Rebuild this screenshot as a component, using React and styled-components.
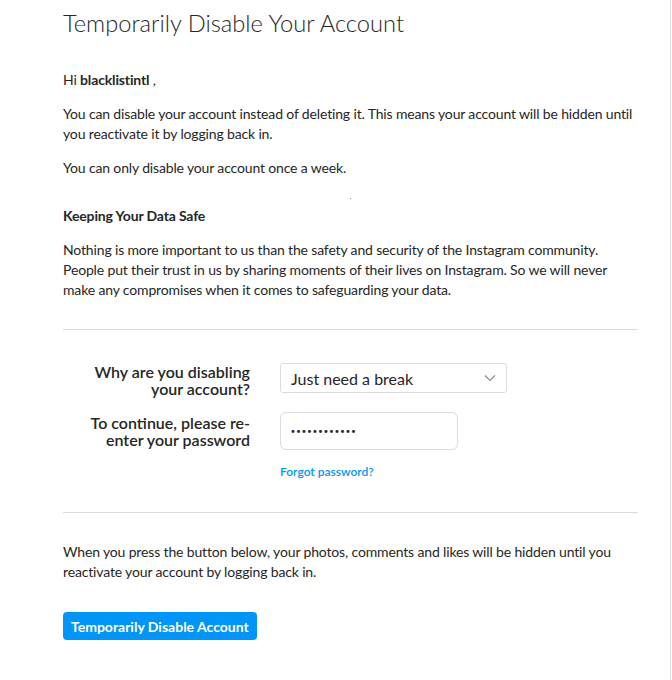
import React from "react";
import styled, { createGlobalStyle } from "styled-components";

const Global = createGlobalStyle`
  html, body { margin: 0; padding: 0; background: #fff; }
  body { font-family: Lato, "Liberation Sans", sans-serif; color: #262626; }
`;

const Page = styled.main`
  box-sizing: border-box;
  width: 671px;
  min-height: 680px;
  border-right: 1px solid #dbdbdb;
  padding: 9px 32px 0 63px;
`;

const Title = styled.h1`
  margin: 0;
  font-size: 23.7px;
  line-height: 28px;
  font-weight: 300;
  color: #262626;
`;

const Text = styled.p`
  margin: ${(p) => p.$top || 14}px 0 0;
  font-size: 14px;
  line-height: 20px;
  letter-spacing: -0.15px;
  color: #262626;
`;

const Heading = styled.h2`
  margin: 0;
  font-size: 14px;
  line-height: 20px;
  font-weight: 700;
  letter-spacing: -0.15px;
`;

const Dot = styled.div`
  height: 28px;
  display: flex;
  align-items: flex-end;
  justify-content: center;
  padding-bottom: 7px;
  box-sizing: border-box;
  &::after {
    content: "";
    width: 1px;
    height: 1px;
    margin-left: -1px;
    background: #8e8e8e;
  }
`;

const Divider = styled.hr`
  margin: ${(p) => p.$top}px 0 0;
  border: 0;
  border-top: 1px solid #dbdbdb;
  height: 0;
`;

const Form = styled.div`
  display: grid;
  grid-template-columns: 187px 1fr;
  column-gap: 30px;
  row-gap: 15px;
  margin-top: 33px;
  align-items: center;
`;

const Label = styled.label`
  justify-self: end;
  width: 170px;
  text-align: right;
  font-size: 16px;
  line-height: 17px;
  font-weight: 600;
  color: #262626;
`;

const SelectBox = styled.div`
  align-self: start;
  box-sizing: border-box;
  width: 227px;
  height: 30px;
  border: 1px solid #dbdbdb;
  border-radius: 3px;
  display: flex;
  align-items: center;
  justify-content: space-between;
  padding: 0 10px 0 10px;
  font-size: 16px;
  color: #262626;
`;

const PasswordBox = styled.div`
  box-sizing: border-box;
  width: 178px;
  height: 38px;
  border: 1px solid #dbdbdb;
  border-radius: 6px;
  display: flex;
  align-items: center;
  padding-left: 9px;
  font-size: 10px;
  letter-spacing: -0.4px;
  color: #262626;
  font-family: "DejaVu Sans", sans-serif;
`;

const Forgot = styled.a`
  grid-column: 2;
  margin-top: -1px;
  font-size: 12px;
  line-height: 16px;
  font-weight: 600;
  color: #0095f6;
  text-decoration: none;
`;

const Button = styled.button`
  margin-top: 30px;
  height: 28px;
  padding: 0 8px;
  border: 0;
  border-radius: 4px;
  background: #0095f6;
  color: #fff;
  font-family: Lato, "Liberation Sans", sans-serif;
  font-size: 14px;
  font-weight: 700;
  cursor: pointer;
`;

const Chevron = () => (
  <svg width="12" height="8" viewBox="0 0 12 8" fill="none">
    <path d="M1 1.5l5 5 5-5" stroke="#8e8e8e" strokeWidth="1.2" />
  </svg>
);

export default function App() {
  return (
    <>
      <Global />
      <Page>
        <Title>Temporarily Disable Your Account</Title>
        <Text $top={33}>
          Hi <b>blacklistintl</b> ,
        </Text>
        <Text>
          You can disable your account instead of deleting it. This means your account will be hidden until
          you reactivate it by logging back in.
        </Text>
        <Text>You can only disable your account once a week.</Text>
        <Dot />
        <Heading>Keeping Your Data Safe</Heading>
        <Text>
          Nothing is more important to us than the safety and security of the Instagram community.
          People put their trust in us by sharing moments of their lives on Instagram. So we will never
          make any compromises when it comes to safeguarding your data.
        </Text>
        <Divider $top={29} />
        <Form>
          <Label>Why are you disabling your account?</Label>
          <SelectBox>
            <span>Just need a break</span>
            <Chevron />
          </SelectBox>
          <Label>To continue, please re-enter your password</Label>
          <PasswordBox>••••••••••••</PasswordBox>
          <Forgot href="#">Forgot password?</Forgot>
        </Form>
        <Divider $top={32} />
        <Text $top={29}>
          When you press the button below, your photos, comments and likes will be hidden until you
          reactivate your account by logging back in.
        </Text>
        <Button>Temporarily Disable Account</Button>
      </Page>
    </>
  );
}
